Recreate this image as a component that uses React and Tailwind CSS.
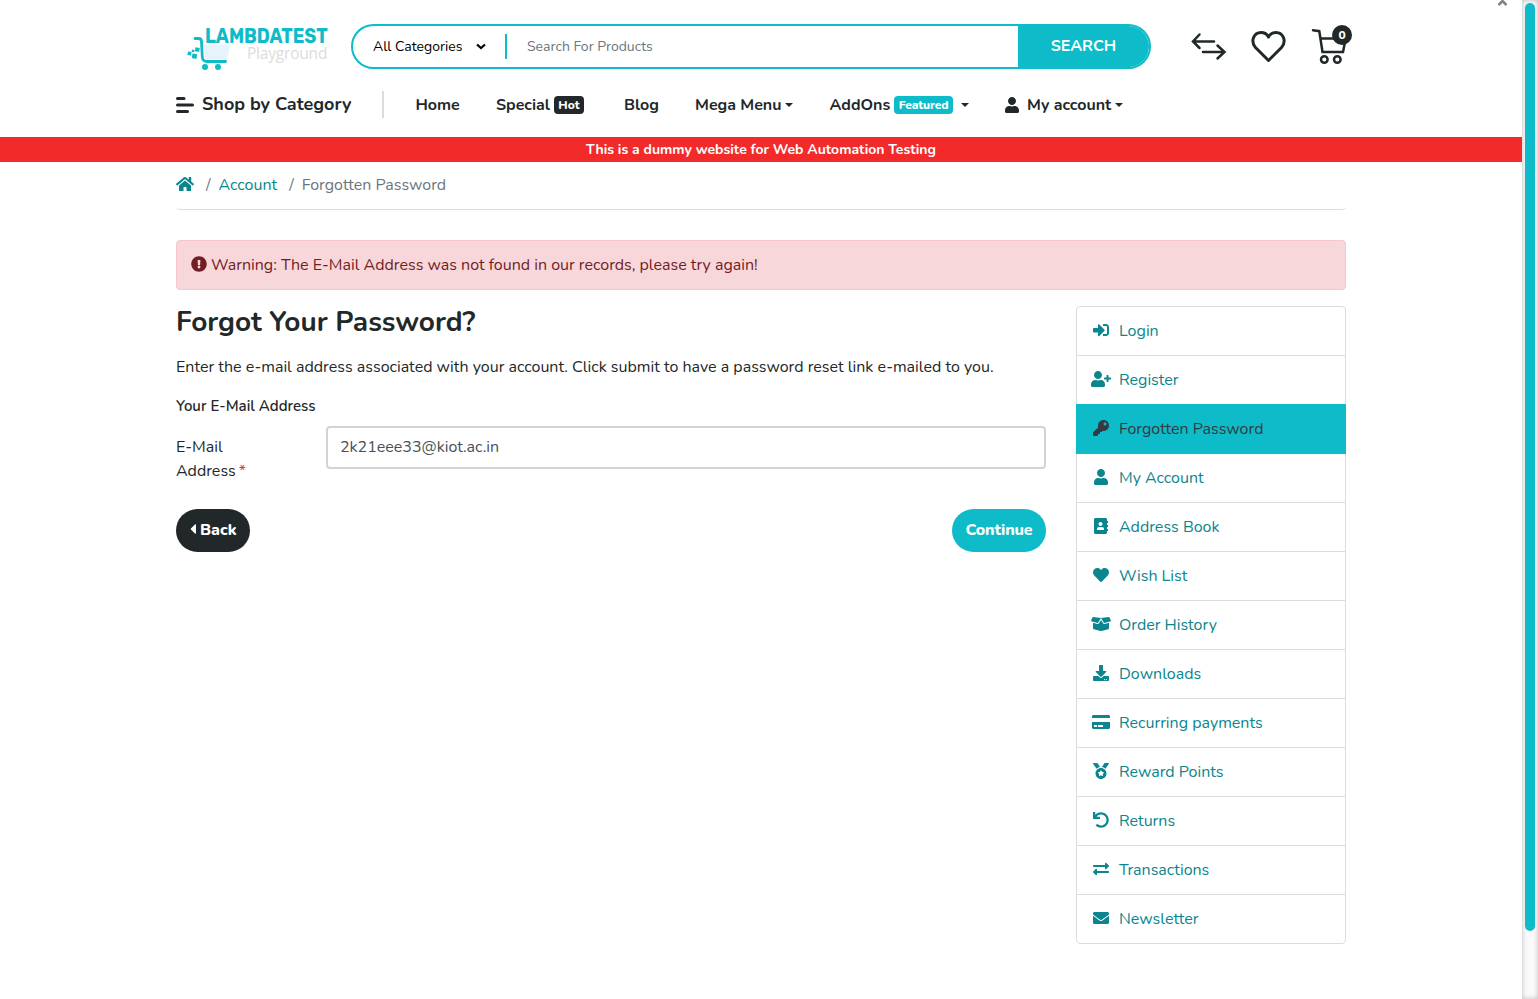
import { FaSignInAlt, FaUserPlus, FaKey, FaUser, FaAddressBook, FaHeart, FaBoxOpen, FaDownload, FaCreditCard, FaMedal, FaUndo, FaExchangeAlt, FaEnvelope, FaHome, FaExclamationCircle, FaCaretLeft } from "react-icons/fa";

const side = [
  [FaSignInAlt, "Login", "h-4 w-4"],
  [FaUserPlus, "Register", "h-4 w-5"],
  [FaKey, "Forgotten Password", "h-4 w-4"],
  [FaUser, "My Account", "h-4 w-[14px]"],
  [FaAddressBook, "Address Book", "h-4 w-[14px]"],
  [FaHeart, "Wish List", "h-4 w-4"],
  [FaBoxOpen, "Order History", "h-4 w-5"],
  [FaDownload, "Downloads", "h-4 w-4"],
  [FaCreditCard, "Recurring payments", "h-4 w-[18px]"],
  [FaMedal, "Reward Points", "h-4 w-4"],
  [FaUndo, "Returns", "h-4 w-4"],
  [FaExchangeAlt, "Transactions", "h-4 w-4"],
  [FaEnvelope, "Newsletter", "h-4 w-4"],
];

function Caret() {
  return <svg className="ml-[3px] h-[4px] w-[8px]" viewBox="0 0 8 4"><path d="M0 0h8L4 4z" fill="#222829" /></svg>;
}

function Logo() {
  return (
    <div className="relative ml-[11px] h-[45px] w-[141px] shrink-0">
      <svg className="absolute left-0 top-0" width="141" height="50" viewBox="0 0 141 50">
        <path d="M17 20.500h24.500q1.500 0 1.200 1.500l-2.200 11.500q-.4 1.800-2 1.800H18z" fill="#e5f3fb" />
        <path d="M8 14.500h3.500q3 0 3 3l.8 15.500q.4 4.500 4.700 4.500h18.500" fill="none" stroke="#0ebbc8" strokeWidth="2.800" strokeLinecap="round" />
        <circle cx="18" cy="43" r="3" fill="#0ebbc8" /><circle cx="31" cy="43" r="3" fill="#0ebbc8" />
        <path d="M8.500 23.300l4.300.7-.7 4-4.300-.7zM5.500 29.500l4.700.7-.8 4.700-4.700-.8zM1 27.500l3.500.6-.6 3.400-3.500-.6zM5 25.500l2.500.4-.4 2.400-2.500-.4z" fill="#0ebbc8" />
      </svg>
      <span className="absolute left-[18px] top-[4px] font-['Rubik',sans-serif] text-[20px] font-bold leading-[16px] text-[#0ebbc8]"><span className="inline-block origin-left scale-x-[0.91]">LAMBDATEST</span></span>
      <span className="absolute left-[60px] top-[21px] font-['Open_Sans',sans-serif] text-[15.5px] leading-[16px] tracking-[-0.2px] text-[#dcdcdc]">Playground</span>
    </div>
  );
}

export default function App() {
  return (
    <div className="flex h-[999px] overflow-hidden bg-white font-['Nunito','Lato',sans-serif] text-base leading-6 text-[#222829]">
      <div className="relative w-[1522px]">
        <svg className="absolute left-[1497px] top-0" width="11" height="6" viewBox="0 0 11 6"><path d="M1.500 5L5.500 1L9.500 5" fill="none" stroke="#7a8587" strokeWidth="2.500" /></svg>
        <header>
          <div className="mx-auto flex h-[93px] w-[1170px] items-start pt-[24px]">
            <Logo />
            <div className="ml-[23px] flex h-[45px] w-[800px] shrink-0 items-center overflow-hidden rounded-full border-2 border-[#0ebbc8]">
              <div className="flex w-[152px] items-center pl-[20px] text-sm text-black"><span className="whitespace-nowrap">All Categories</span>
                <svg className="ml-[14px] w-[10px]" viewBox="0 0 10 7"><path d="M1 1.500l4 3.500 4-3.500" fill="none" stroke="#000" strokeWidth="2.200" /></svg>
              </div>
              <div className="h-[25px] w-[2px] bg-[#0ebbc8]" />
              <div className="flex-1 pl-[20px] text-sm text-[#6c757d]">Search For Products</div>
              <div className="flex h-[45px] w-[131px] items-center justify-center bg-[#0ebbc8] pb-[1px] font-bold text-white">SEARCH</div>
            </div>
            <svg className="ml-[40px] mt-[8px] shrink-0" width="36" height="30" viewBox="0 0 36 30" fill="none" stroke="#222829" strokeWidth="2.500" strokeLinecap="round"><path d="M23 9.500H3M8.500 2.500L2 9.500L8.500 16M12 20H32.500M26.500 13.500L33.500 20L26.500 26.500" /></svg>
            <svg className="ml-[24px] mt-[5px] shrink-0" width="36" height="34" viewBox="0 0 36 34" fill="none" stroke="#222829" strokeWidth="3"><path d="M17.500 31.500L4.500 18.500C-1 12 3 3.500 10 3.500C13.500 3.500 16 5 17.500 8C19 5 21.500 3.500 25 3.500C32 3.500 36 12 30.500 18.500Z" strokeLinejoin="round" /></svg>
            <div className="relative ml-[24px] shrink-0">
              <svg className="mt-[4px]" width="36" height="37" viewBox="0 0 36 37" fill="none" stroke="#222829" strokeWidth="2.500" strokeLinecap="round"><path d="M2 2.300l6.300.9l3.200 20.800h20.500l2-10M9.500 10.500h22" /><circle cx="13.300" cy="31.500" r="3.300" /><circle cx="26.300" cy="31.500" r="3.300" /></svg>
              <span className="absolute left-[21px] top-[1px] h-5 w-5 rounded-full bg-[#222829] text-center text-xs font-extrabold leading-5 text-white">0</span>
            </div>
          </div>
          <nav className="mx-auto flex h-[44px] w-[1170px] items-start whitespace-nowrap font-bold">
            <div className="-mt-px flex h-6 w-[206px] items-center text-lg">
              <svg className="mr-2 mt-[1px]" width="18" height="16" viewBox="0 0 18 16" stroke="#222829" strokeWidth="3" strokeLinecap="round"><path d="M1.500 1.500H8M1.500 8H16.500M1.500 14.500H11.500" /></svg>
              Shop by Category
            </div>
            <div className="-mt-[2px] h-[27px] w-[2px] bg-[#dcdcdc]" />
            <div className="ml-[31.500px] flex h-6 w-[80.500px] items-center">Home</div>
            <div className="flex h-6 w-[128px] items-center">Special<span className="ml-[4px] h-[18px] rounded bg-[#222829] px-[4.500px] text-xs font-extrabold leading-[18px] text-white">Hot</span></div>
            <div className="flex h-6 w-[71px] items-center">Blog</div>
            <div className="flex h-6 w-[134.500px] items-center">Mega Menu<Caret /></div>
            <div className="flex h-6 w-[175.500px] items-center">AddOns<span className="ml-[4px] mr-[5px] h-[18px] rounded bg-[#0ebbc8] px-[4.500px] text-xs font-extrabold leading-[18px] tracking-[-0.1px] text-white">Featured</span><Caret /></div>
            <div className="flex h-6 items-center"><FaUser className="mr-2 h-4 w-[14px]" />My account<span className="w-px" /><Caret /></div>
          </nav>
          <div className="h-[25px] bg-[#f32a2a] text-center text-sm font-bold leading-[25px] text-white">This is a dummy website for Web Automation Testing</div>
        </header>
        <main className="mx-auto w-[1170px]">
          <div className="mb-[30px] flex h-[48px] rounded border-b border-[#dcdcdc] pt-[11px] text-[#6c757d]">
            <FaHome className="mt-[3px] h-4 w-[18px] text-[#0b858e]" /><span className="ml-[12px] mr-2">/</span><span className="text-[#0b858e]">Account</span><span className="ml-3 mr-2">/</span><span>Forgotten Password</span>
          </div>
          <div className="mb-4 flex h-[50px] items-center rounded border border-[#f5c6cb] bg-[#f8d7da] pl-[14px] text-[#721c24]"><FaExclamationCircle className="mb-[2px] mr-1" />Warning: The E-Mail Address was not found in our records, please try again!</div>
          <div className="flex items-start gap-[30px]">
            <section className="w-[870px]">
              <h1 className="text-[28px] font-bold leading-[32px]">Forgot Your Password?</h1>
              <p className="mt-[17px]">Enter the e-mail address associated with your account. Click submit to have a password reset link e-mailed to you.</p>
              <h2 className="mt-[15px] text-[15px] font-semibold">Your E-Mail Address</h2>
              <div className="mt-[8px] flex">
                <div className="w-[150px] pt-[9px]">E-Mail<br />Address<span className="ml-[3px] text-[#dc3545]">*</span></div>
                <div className="flex h-[43px] w-[720px] items-center rounded border-2 border-[#ced4da] px-3 pb-[2px] text-[#495057]">2k21eee33@kiot.ac.in</div>
              </div>
              <div className="mt-[26px] flex justify-between font-extrabold text-white">
                <div className="flex h-[43px] w-[74px] items-center rounded-full bg-[#222829] pb-[1px] pl-[13px]"><FaCaretLeft className="mb-[2px] mr-[3px] h-4 w-2" />Back</div>
                <div className="flex h-[43px] w-[94px] items-center justify-center rounded-full bg-[#0ebbc8] pb-[1px] tracking-[-0.15px]">Continue</div>
              </div>
            </section>
            <aside className="w-[270px] rounded border border-[#dcdcdc]">
              {side.map(([Icon, label, size], i) => (
                <div key={label} className={i === 2 ? "-mx-px -mt-px flex h-[50px] items-center bg-[#0ebbc8] pl-[15px] text-[#343a40]" : i === 12 ? "flex h-[48px] items-center pl-[14px] text-[#0b858e]" : "flex h-[49px] items-center border-b border-[#dcdcdc] pl-[14px] text-[#0b858e]"}>
                  <span className="mb-[2px] mr-[8px] flex w-5 justify-center"><Icon className={size} /></span>{label}
                </div>
              ))}
            </aside>
          </div>
        </main>
      </div>
      <div className="h-[999px] w-4 bg-[#fafafa] px-[3px] pt-[3px] shadow-[inset_0_0_5px_#bbb]"><div className="h-[928px] w-[10px] rounded-full bg-[#0ebbc8]" /></div>
    </div>
  );
}
